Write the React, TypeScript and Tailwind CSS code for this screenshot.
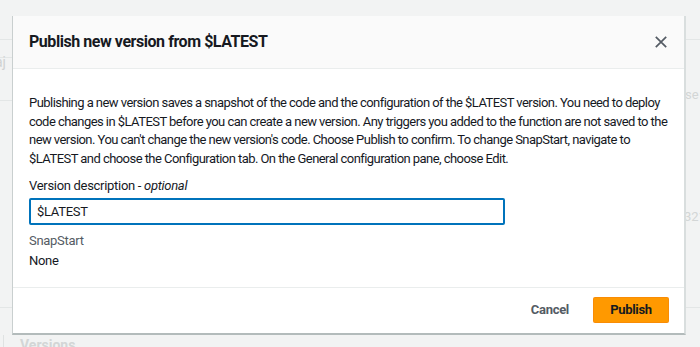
import React from "react";

const lines = [
  "Publishing a new version saves a snapshot of the code and the configuration of the $LATEST version. You need to deploy",
  "code changes in $LATEST before you can create a new version. Any triggers you added to the function are not saved to the",
  "new version. You can't change the new version's code. Choose Publish to confirm. To change SnapStart, navigate to",
  "$LATEST and choose the Configuration tab. On the General configuration pane, choose Edit.",
];

export default function App() {
  const font = { fontFamily: 'Roboto, "Noto Sans", Arial, sans-serif' };
  return (
    <div className="relative w-[700px] h-[347px] overflow-hidden bg-[#f2f3f3] text-[#16191f]" style={font}>
      {/* faint background page, laid out by flow */}
      <div className="flex h-full">
        <div className="w-[12px] flex flex-col pt-[39px]">
          <div className="h-[18px] border-t border-[#e3e6e6]" />
          <div className="h-[43px] border-t border-[#e3e6e6] -ml-[5px] pt-[0px] text-[14px] leading-[9px] pt-[0px] text-[#cfd2d2]">
            <div className="pt-[0px]">aj</div>
          </div>
          <div className="h-[207px] border-t border-[#e3e6e6]" />
          <div className="flex-1 border-t border-[#e3e6e6] pt-[27px] pl-[3px]">
            <div className="h-full border-l border-[#dfe2e2]" />
          </div>
        </div>
        <div className="flex-1 flex flex-col justify-end pl-[8px]">
          <div className="h-[11px] overflow-visible text-[14px] font-bold leading-[18px] text-[#d3d6d6]">Versions</div>
        </div>
        <div className="w-[16px] flex flex-col pt-[39px]">
          <div className="h-[47px] border-t border-[#e3e6e6]" />
          <div className="h-[122px] pl-[1px] text-[13px] leading-[18px] text-[#d3d6d6]">se</div>
          <div className="h-[99px] text-[13px] leading-[18px] text-[#d3d6d6] whitespace-nowrap">321</div>
          <div className="flex-1 border-t border-[#e3e6e6]" />
        </div>
      </div>

      {/* modal overlay */}
      <div className="absolute left-[12px] top-[16px] w-[674px] h-[319px] bg-white border-l border-[#c9cfcf] border-r-2 border-r-[#d9dede] border-b-2 border-b-[#b3bbbb] flex flex-col">
        <div className="h-[53px] shrink-0 bg-[#fafafa] border-b border-[#eaeded] flex items-center justify-between pl-[16px] pr-[17px]">
          <h2 className="text-[16px] font-bold leading-[22px] tracking-[-0.45px] text-[#16191f]">Publish new version from $LATEST</h2>
          <svg width="12" height="12" viewBox="0 0 12 12" className="text-[#545b64]">
            <path d="M0.8 0.8 L11.2 11.2 M11.2 0.8 L0.8 11.2" stroke="currentColor" strokeWidth="1.7" fill="none" />
          </svg>
        </div>
        <div className="flex-1 px-[16px] pt-[25px] flex flex-col text-[13px] tracking-[-0.55px]">
          <p className="leading-[18.5px]">
            {lines.map((l, i) => (
              <span key={i} className="block whitespace-nowrap">{l}</span>
            ))}
          </p>
          <div className="mt-[9px] leading-[18px] tracking-[-0.3px]">
            Version description - <i>optional</i>
          </div>
          <div className="mt-[3px] w-[476px] h-[27px] border-2 border-[#0073bb] rounded-[2px] flex items-center px-[6px] tracking-[-0.3px]">
            $LATEST
          </div>
          <div className="mt-[7px] leading-[18px] tracking-[-0.3px] text-[#545b64]">SnapStart</div>
          <div className="mt-[2px] leading-[18px] tracking-[-0.3px]">None</div>
        </div>
        <div className="h-[46px] shrink-0 border-t border-[#eaeded] flex items-center justify-end gap-[24px] pr-[15px] pb-[1px]">
          <button className="text-[13px] font-bold tracking-[-0.3px] text-[#545b64]">Cancel</button>
          <button className="w-[76px] h-[26px] bg-[#ff9900] border border-[#ec7211]/30 rounded-[2px] text-[13px] font-bold tracking-[-0.3px] text-[#16191f]">
            Publish
          </button>
        </div>
      </div>
    </div>
  );
}
